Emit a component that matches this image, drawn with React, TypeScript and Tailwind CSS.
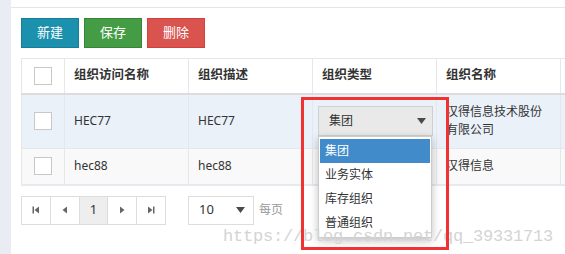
import React from "react";

const font = { fontFamily: '"Noto Sans", "Noto Sans CJK SC", sans-serif' };

function Checkbox() {
  return <div className="w-[18px] h-[18px] border border-[#c8c8c8] bg-white mx-auto" />;
}

function Caret({ className = "" }: { className?: string }) {
  return (
    <svg width="9" height="6" viewBox="0 0 9 6" className={className}>
      <path d="M0 0 H9 L4.5 6 Z" fill="#4a4a4a" />
    </svg>
  );
}

function PagerIcon({ kind }: { kind: "first" | "prev" | "next" | "last" }) {
  return (
    <svg width="8" height="8" viewBox="0 0 8 8">
      {kind === "first" && (
        <>
          <rect x="0.5" y="0.5" width="1.5" height="7" fill="#666" />
          <path d="M7 0.5 V7.5 L2.5 4 Z" fill="#666" />
        </>
      )}
      {kind === "prev" && <path d="M6 0.5 V7.5 L1.5 4 Z" fill="#666" />}
      {kind === "next" && <path d="M2 0.5 V7.5 L6.5 4 Z" fill="#666" />}
      {kind === "last" && (
        <>
          <path d="M1 0.5 V7.5 L5.5 4 Z" fill="#666" />
          <rect x="6" y="0.5" width="1.5" height="7" fill="#666" />
        </>
      )}
    </svg>
  );
}

export default function App() {
  const options = ["集团", "业务实体", "库存组织", "普通组织"];
  return (
    <div className="w-[565px] h-[254px] relative overflow-hidden bg-white flex text-[#333]" style={font}>
      <div className="w-[11px] shrink-0 bg-[#e9ecf2]" />

      <div className="flex-1 pt-[7px]">
        <div className="border-t border-[#e6e6e6] pl-[10px] pt-[10px]">
          {/* Toolbar */}
          <div className="flex gap-[5px]">
            <button className="w-[58px] h-[30px] bg-[#1b91ae] border border-[#177e98] text-white text-[13px]">新建</button>
            <button className="w-[58px] h-[30px] bg-[#449d44] border border-[#398439] text-white text-[13px]">保存</button>
            <button className="w-[58px] h-[30px] bg-[#d9534f] border border-[#d43f3a] text-white text-[13px]">删除</button>
          </div>

          {/* Table */}
          <table className="mt-[10px] border-collapse table-fixed w-[620px] text-[12px]">
            <colgroup>
              <col className="w-[43px]" />
              <col className="w-[124px]" />
              <col className="w-[124px]" />
              <col className="w-[124px]" />
              <col className="w-[124px]" />
              <col className="w-[81px]" />
            </colgroup>
            <thead>
              <tr className="h-[35px] bg-white border-b-2 border-[#dcdcdc]">
                <th className="border border-[#e4e7eb] border-b-0"><Checkbox /></th>
                <th className="border border-[#e4e7eb] border-b-0 text-left px-[9px] text-[12.5px] font-bold">组织访问名称</th>
                <th className="border border-[#e4e7eb] border-b-0 text-left px-[9px] text-[12.5px] font-bold">组织描述</th>
                <th className="border border-[#e4e7eb] border-b-0 text-left px-[9px] text-[12.5px] font-bold">组织类型</th>
                <th className="border border-[#e4e7eb] border-b-0 text-left px-[9px] text-[12.5px] font-bold">组织名称</th>
                <th className="border border-[#e4e7eb] border-b-0" />
              </tr>
            </thead>
            <tbody>
              <tr className="h-[55px] bg-[#eaf1f8]">
                <td className="border border-[#e4e7eb]"><Checkbox /></td>
                <td className="border border-[#e4e7eb] px-[9px]">HEC77</td>
                <td className="border border-[#e4e7eb] px-[9px]">HEC77</td>
                <td className="border border-[#e4e7eb] px-[5px]">
                  <div className="w-[115px] h-[30px] bg-[#e9e9e9] border border-[#d0d0d0] flex items-center justify-between pl-[10px] pr-[6px]">
                    <span>集团</span>
                    <Caret />
                  </div>
                </td>
                <td className="border border-[#e4e7eb] px-[9px] leading-[18px]">汉得信息技术股份有限公司</td>
                <td className="border border-[#e4e7eb]" />
              </tr>
              <tr className="h-[36px] bg-[#f9f9f9] border-b-2 border-[#e6e9ee]">
                <td className="border border-[#e4e7eb]"><Checkbox /></td>
                <td className="border border-[#e4e7eb] px-[9px]">hec88</td>
                <td className="border border-[#e4e7eb] px-[9px]">hec88</td>
                <td className="border border-[#e4e7eb]" />
                <td className="border border-[#e4e7eb] px-[9px]">汉得信息</td>
                <td className="border border-[#e4e7eb]" />
              </tr>
            </tbody>
          </table>

          {/* Pagination */}
          <div className="flex items-center mt-[10px] text-[13px]">
            <div className="flex border border-[#ddd] h-[29px]">
              <div className="w-[29px] flex items-center justify-center border-r border-[#ddd]"><PagerIcon kind="first" /></div>
              <div className="w-[29px] flex items-center justify-center border-r border-[#ddd]"><PagerIcon kind="prev" /></div>
              <div className="w-[28px] flex items-center justify-center border-r border-[#ddd] bg-[#eee]">1</div>
              <div className="w-[29px] flex items-center justify-center border-r border-[#ddd]"><PagerIcon kind="next" /></div>
              <div className="w-[28px] flex items-center justify-center"><PagerIcon kind="last" /></div>
            </div>
            <div className="ml-[22px] w-[66px] h-[29px] border border-[#ddd] flex items-center justify-between pl-[10px] pr-[8px]">
              <span>10</span>
              <Caret />
            </div>
            <span className="ml-[5px] text-[12px] text-[#999]">每页</span>
          </div>
        </div>
      </div>

      {/* Dropdown list */}
      <div className="absolute left-[318px] top-[136px] w-[114px] bg-white border border-[#ccc] shadow-[0_3px_8px_rgba(0,0,0,0.25)] px-[1px] py-[2px] text-[12px]">
        {options.map((o, i) => (
          <div
            key={o}
            className={`h-[24px] flex items-center pl-[5px] ${i === 0 ? "bg-[#428bca] text-white" : "text-[#333]"}`}
          >
            {o}
          </div>
        ))}
      </div>

      {/* Watermark */}
      <div
        className="absolute left-[223px] top-[228px] text-[17px] leading-none text-[#d4d4d4] tracking-[-0.2px] whitespace-nowrap"
        style={{ fontFamily: '"Liberation Mono", monospace' }}
      >
        https://blog.csdn.net/qq_39331713
      </div>

      {/* Red highlight box */}
      <div className="absolute left-[301px] top-[97px] w-[148px] h-[153px] border-[3px] border-[#f03232]" />
    </div>
  );
}
